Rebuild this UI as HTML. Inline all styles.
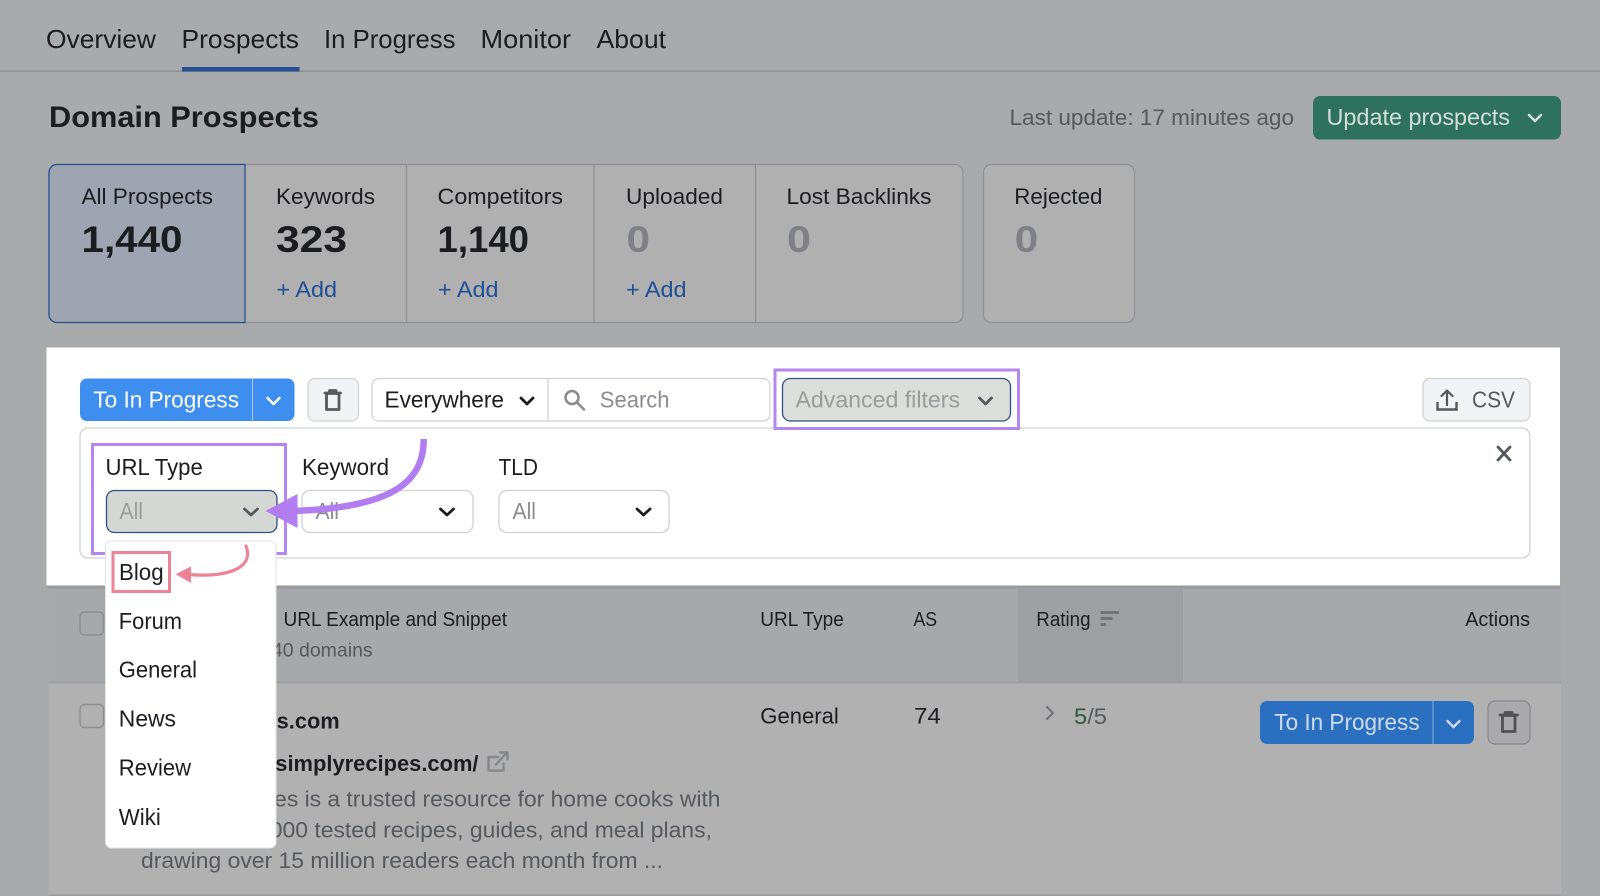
<!DOCTYPE html>
<html lang="en">
<head>
<meta charset="utf-8">
<title>Domain Prospects</title>
<style>
html,body{margin:0;padding:0;width:1600px;height:896px;overflow:hidden;background:#a9aaac}
svg{display:block;filter:blur(.25px)}
text{font-family:"Liberation Sans",Arial,sans-serif;font-size:22px;fill:#1c1d21}
.b{font-weight:700}
.g{fill:#55585c}
.l{fill:#1f4f95}
.c{fill:none;stroke-linecap:round;stroke-linejoin:round}
</style>
</head>
<body>
<svg width="1600" height="896" viewBox="0 0 1600 896" xmlns="http://www.w3.org/2000/svg">
<rect width="1600" height="896" fill="#a9aaac"/>

<!-- tabs -->
<rect x="0" y="70.500" width="1600" height="1.500" fill="#8e9095"/>
<rect x="182" y="67" width="117.500" height="4.500" fill="#245091"/>
<text x="46" y="48" style="font-size:26px" textLength="110" lengthAdjust="spacingAndGlyphs">Overview</text>
<text x="181.500" y="48" style="font-size:26px" textLength="117.500" lengthAdjust="spacingAndGlyphs">Prospects</text>
<text x="324" y="48" style="font-size:26px" textLength="131.500" lengthAdjust="spacingAndGlyphs">In Progress</text>
<text x="480.500" y="48" style="font-size:26px" textLength="90.500" lengthAdjust="spacingAndGlyphs">Monitor</text>
<text x="596.500" y="48" style="font-size:26px" textLength="69.500" lengthAdjust="spacingAndGlyphs">About</text>

<!-- header -->
<text class="b" x="49" y="127" style="font-size:30px" textLength="270" lengthAdjust="spacingAndGlyphs">Domain Prospects</text>
<text class="g" x="1009.500" y="125" style="font-size:22px" textLength="284.500" lengthAdjust="spacingAndGlyphs">Last update: 17 minutes ago</text>
<rect x="1313" y="96" width="248" height="43.500" rx="7" fill="#2e725e"/>
<text x="1326.500" y="125" style="font-size:23px;fill:#d5dfda" textLength="183.500" lengthAdjust="spacingAndGlyphs">Update prospects</text>
<path class="c" d="M1529 115l6 6 6-6" stroke="#d5dfda" stroke-width="2.500"/>

<!-- cards -->
<rect x="49" y="164.500" width="914" height="158" rx="8" fill="#b0b0b1" stroke="#8e9095" stroke-width="1.200"/>
<path d="M245 164.500H57a8 8 0 0 0-8 8v142a8 8 0 0 0 8 8h188z" fill="#9fa5b0" stroke="#245091" stroke-width="1.300"/>
<path d="M406.500 165v157M594 165v157M755.500 165v157" stroke="#8e9095" stroke-width="1.200"/>
<rect x="983.500" y="164.500" width="151" height="158" rx="8" fill="#b0b0b1" stroke="#8e9095" stroke-width="1.200"/>
<text x="81.500" y="204" textLength="131.500" lengthAdjust="spacingAndGlyphs">All Prospects</text>
<text x="276" y="204" textLength="99" lengthAdjust="spacingAndGlyphs">Keywords</text>
<text x="437.500" y="204" textLength="125.500" lengthAdjust="spacingAndGlyphs">Competitors</text>
<text x="626" y="204" textLength="97" lengthAdjust="spacingAndGlyphs">Uploaded</text>
<text x="786.500" y="204" textLength="145" lengthAdjust="spacingAndGlyphs">Lost Backlinks</text>
<text x="1014.300" y="204" textLength="88.200" lengthAdjust="spacingAndGlyphs">Rejected</text>
<text class="b" x="81.500" y="252" style="font-size:37px" textLength="101" lengthAdjust="spacingAndGlyphs">1,440</text>
<text class="b" x="276" y="252" style="font-size:37px" textLength="71" lengthAdjust="spacingAndGlyphs">323</text>
<text class="b" x="437.500" y="252" style="font-size:37px" textLength="91.500" lengthAdjust="spacingAndGlyphs">1,140</text>
<text class="b" x="626.500" y="252" style="font-size:37px;fill:#7f8187" textLength="23.500" lengthAdjust="spacingAndGlyphs">0</text>
<text class="b" x="787" y="252" style="font-size:37px;fill:#7f8187" textLength="24" lengthAdjust="spacingAndGlyphs">0</text>
<text class="b" x="1014.800" y="252" style="font-size:37px;fill:#7f8187" textLength="23.500" lengthAdjust="spacingAndGlyphs">0</text>
<text class="l" x="276.500" y="297" textLength="60.500" lengthAdjust="spacingAndGlyphs">+ Add</text>
<text class="l" x="438" y="297" textLength="60.500" lengthAdjust="spacingAndGlyphs">+ Add</text>
<text class="l" x="626" y="297" textLength="60.500" lengthAdjust="spacingAndGlyphs">+ Add</text>

<!-- white panel -->
<rect x="46.500" y="347.500" width="1513.500" height="238" fill="#ffffff"/>

<!-- table -->
<rect x="48.500" y="585.500" width="1512.500" height="96" fill="#a7a8ab"/>
<rect x="48.500" y="683" width="1512.500" height="212" fill="#b1b1b1"/>
<rect x="48.500" y="681.500" width="1512.500" height="1.800" fill="#9b9ca0"/>
<rect x="48.500" y="894.500" width="1512.500" height="1.500" fill="#9b9ca0"/>
<rect x="46.500" y="585.500" width="1513.500" height="3" fill="#999a9e"/>
<rect x="1018" y="589" width="165" height="92.500" fill="#9e9fa3"/>
<rect x="80" y="612" width="23.500" height="23" rx="4.500" fill="none" stroke="#8d8e91" stroke-width="1.400"/>
<rect x="80" y="704.500" width="23.500" height="23" rx="4.500" fill="none" stroke="#8d8e91" stroke-width="1.400"/>
<text x="283.500" y="626" style="font-size:20px" textLength="223.500" lengthAdjust="spacingAndGlyphs">URL Example and Snippet</text>
<text class="g" x="372.700" y="656.500" style="font-size:19.500px" text-anchor="end">1,440 domains</text>
<text x="760.300" y="626" style="font-size:20px" textLength="83.500" lengthAdjust="spacingAndGlyphs">URL Type</text>
<text x="913.500" y="626" style="font-size:20px" textLength="23.500" lengthAdjust="spacingAndGlyphs">AS</text>
<text x="1036.300" y="626" style="font-size:20px" textLength="54.200" lengthAdjust="spacingAndGlyphs">Rating</text>
<path d="M1100.500 612.500h18.500M1100.500 618.500h12M1100.500 624.500h5.500" stroke="#6f7075" stroke-width="2.800"/>
<text x="1465.200" y="626" style="font-size:20px" textLength="64.800" lengthAdjust="spacingAndGlyphs">Actions</text>

<text class="b" x="339.700" y="728.300" style="font-size:21.800px" text-anchor="end">simplyrecipes.com</text>
<text class="b" x="478.500" y="771.200" style="font-size:21.900px" text-anchor="end">https://www.simplyrecipes.com/</text>
<path class="c" d="M498 757h-9.500v13.500h15v-7M496 764.500l11-12M500 752.500h7.500v7" stroke="#85878c" stroke-width="2.400"/>
<text class="g" x="141" y="806.700" textLength="579.500" lengthAdjust="spacingAndGlyphs">Simply Recipes is a trusted resource for home cooks with</text>
<text class="g" x="141" y="837.300" textLength="571" lengthAdjust="spacingAndGlyphs">more than 3,000 tested recipes, guides, and meal plans,</text>
<text class="g" x="141" y="868" textLength="522" lengthAdjust="spacingAndGlyphs">drawing over 15 million readers each month from ...</text>

<text x="760.300" y="723.300" textLength="78.500" lengthAdjust="spacingAndGlyphs">General</text>
<text x="914" y="723.300" textLength="26.800" lengthAdjust="spacingAndGlyphs">74</text>
<path class="c" d="M1047 707l6 6-6 6" stroke="#75767b" stroke-width="2.200"/>
<text x="1074" y="724" textLength="33" lengthAdjust="spacingAndGlyphs" style="fill:#2d5a43">5<tspan style="fill:#55585c">/5</tspan></text>

<rect x="1260" y="701" width="214" height="43" rx="7" fill="#2a6fc0"/>
<path d="M1433 701v43" stroke="#8fb0d8" stroke-width="1"/>
<text x="1274.300" y="730" style="font-size:23px;fill:#cfdcec" textLength="145.300" lengthAdjust="spacingAndGlyphs">To In Progress</text>
<path class="c" d="M1447.500 721l6 6 6-6" stroke="#cfdcec" stroke-width="2.400"/>
<rect x="1488" y="701" width="42" height="43" rx="7" fill="#aaaaac" stroke="#85878b" stroke-width="1.200"/>
<g class="c" stroke="#4f5155" stroke-width="2.800"><path d="M1500 715h17.500M1505 715v-2.500h7v2.500"/><rect x="1502.500" y="715.500" width="12.500" height="16"/></g>

<!-- toolbar -->
<rect x="80" y="378.500" width="214.500" height="42.500" rx="7" fill="#3d8eef"/>
<path d="M252.500 378.500v42.500" stroke="#a6cbf7" stroke-width="1"/>
<text x="93.300" y="407.500" style="font-size:23px;fill:#fff" textLength="145.700" lengthAdjust="spacingAndGlyphs">To In Progress</text>
<path class="c" d="M267.500 398l6 6 6-6" stroke="#fff" stroke-width="2.600"/>
<rect x="308" y="378.500" width="50.500" height="42.500" rx="7" fill="#f2f3f5" stroke="#cfd1d4" stroke-width="1.200"/>
<g class="c" stroke="#57595d" stroke-width="2.800"><path d="M325 393h15.500M329.500 393v-2.500h6.500v2.500"/><rect x="326.500" y="393.500" width="12.500" height="16"/></g>
<rect x="372" y="378.500" width="398" height="42.500" rx="7" fill="#fff" stroke="#cfd1d4" stroke-width="1.200"/>
<path d="M548 378.500v42.500" stroke="#cfd1d4" stroke-width="1.200"/>
<text x="384.500" y="407.500" style="font-size:23px" textLength="119.500" lengthAdjust="spacingAndGlyphs">Everywhere</text>
<path class="c" d="M521 398l6 6 6-6" stroke="#1c1d21" stroke-width="2.800"/>
<g class="c" stroke="#8a8c90" stroke-width="2.600"><circle cx="572" cy="397.500" r="6.500"/><path d="M577 402.500l7 7"/></g>
<text x="599.800" y="407.500" style="font-size:23px;fill:#8a8c90" textLength="69.700" lengthAdjust="spacingAndGlyphs">Search</text>

<rect x="782.500" y="378.500" width="228" height="42.500" rx="8" fill="#dcdedb" stroke="#2c5282" stroke-width="1.300"/>
<text x="795.500" y="407.500" style="font-size:23px;fill:#9a9b9c" textLength="164.500" lengthAdjust="spacingAndGlyphs">Advanced filters</text>
<path class="c" d="M979.500 398l6 6 6-6" stroke="#55585c" stroke-width="2.800"/>

<rect x="1423" y="378.500" width="107" height="42.500" rx="7" fill="#f2f3f5" stroke="#cfd1d4" stroke-width="1.200"/>
<path class="c" d="M1447 405v-14M1441.500 396l5.500-5.500 5.500 5.500" stroke="#55585c" stroke-width="2.200"/>
<path d="M1437.500 402v7.500h19v-7.500" fill="none" stroke="#55585c" stroke-width="2.400"/>
<text class="g" x="1472" y="407.500" style="font-size:23px" textLength="43" lengthAdjust="spacingAndGlyphs">CSV</text>

<!-- filter panel -->
<rect x="80" y="428" width="1449.800" height="130" rx="8" fill="#fff" stroke="#d0d2d4" stroke-width="1.300"/>
<rect x="775" y="370" width="243.500" height="58.500" fill="none" stroke="#b585f2" stroke-width="3"/>
<path class="c" d="M1498 447l12 13M1510 447l-12 13" stroke="#55585c" stroke-width="2.800"/>
<rect x="92.500" y="444.500" width="193" height="109" fill="none" stroke="#b585f2" stroke-width="3"/>
<text x="105.500" y="475" style="font-size:23px" textLength="97.300" lengthAdjust="spacingAndGlyphs">URL Type</text>
<text x="302" y="475" style="font-size:23px" textLength="87" lengthAdjust="spacingAndGlyphs">Keyword</text>
<text x="498.500" y="475" style="font-size:23px" textLength="39.500" lengthAdjust="spacingAndGlyphs">TLD</text>
<rect x="106.500" y="490.500" width="170.500" height="42" rx="8" fill="#d5d7d4" stroke="#2c5282" stroke-width="1.300"/>
<rect x="302" y="490.500" width="171" height="42" rx="8" fill="#fff" stroke="#cfd1d4" stroke-width="1.300"/>
<rect x="499" y="490.500" width="170" height="42" rx="8" fill="#fff" stroke="#cfd1d4" stroke-width="1.300"/>
<text x="119.500" y="519" style="font-size:23px;fill:#9a9b9c" textLength="23.500" lengthAdjust="spacingAndGlyphs">All</text>
<text x="315.500" y="519" style="font-size:23px;fill:#8a8c90" textLength="23.500" lengthAdjust="spacingAndGlyphs">All</text>
<text x="512.500" y="519" style="font-size:23px;fill:#8a8c90" textLength="23.500" lengthAdjust="spacingAndGlyphs">All</text>
<path class="c" d="M244.500 509l6.500 6 6.500-6" stroke="#55585c" stroke-width="2.800"/>
<path class="c" d="M440.500 509l6.500 6 6.500-6" stroke="#1c1d21" stroke-width="2.800"/>
<path class="c" d="M637 509l6.500 6 6.500-6" stroke="#1c1d21" stroke-width="2.800"/>

<!-- purple arrow -->
<path d="M423.700 439C424 482 392 508 292 511" fill="none" stroke="#b17df0" stroke-width="6.500"/>
<path d="M265.500 511L297.500 494V528Z" fill="#b17df0"/>

<!-- dropdown -->
<rect x="105.500" y="541" width="170.500" height="307" rx="6" fill="#fff" stroke="#e4e5e7" stroke-width="1"/>
<rect x="113" y="552.500" width="56.500" height="39" fill="none" stroke="#ee8296" stroke-width="3"/>
<text x="119" y="580" style="font-size:23px" textLength="44.600" lengthAdjust="spacingAndGlyphs">Blog</text>
<text x="118.800" y="629" style="font-size:23px" textLength="63.200" lengthAdjust="spacingAndGlyphs">Forum</text>
<text x="118.800" y="677.700" style="font-size:23px" textLength="78.200" lengthAdjust="spacingAndGlyphs">General</text>
<text x="118.800" y="726.700" style="font-size:23px" textLength="57.200" lengthAdjust="spacingAndGlyphs">News</text>
<text x="118.800" y="775.700" style="font-size:23px" textLength="72.200" lengthAdjust="spacingAndGlyphs">Review</text>
<text x="118.800" y="825" style="font-size:23px" textLength="42" lengthAdjust="spacingAndGlyphs">Wiki</text>

<!-- pink arrow -->
<path d="M246 546C254 566 232 578 188 574.500" fill="none" stroke="#ee8296" stroke-width="3.200" stroke-linecap="round"/>
<path d="M175.500 574.300L191 566.500V582.900Z" fill="#ee8296"/>
</svg>
</body>
</html>
